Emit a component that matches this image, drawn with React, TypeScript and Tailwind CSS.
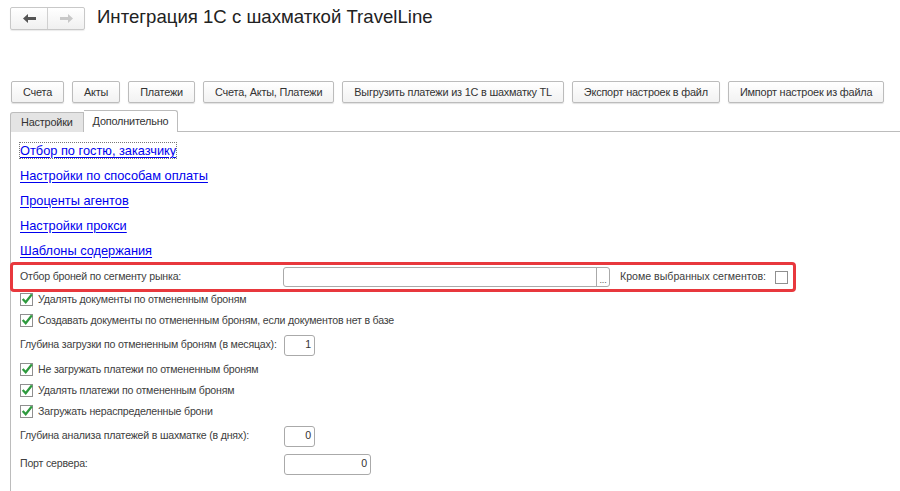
import React from 'react';

const font = { fontFamily: '"Liberation Sans", Arial, sans-serif' };

function Check({ checked }: { checked: boolean }) {
  return (
    <span className="relative w-[13px] h-[13px] border border-[#8f8f8f] bg-white shrink-0 block">
      {checked && (
        <svg viewBox="0 0 13 13" className="absolute -left-px -top-[2px] w-[14px] h-[14px]">
          <path d="M2.5 6.5 L5.3 9.5 L11 2.2" fill="none" stroke="#2e9a3e" strokeWidth="2.2" />
        </svg>
      )}
    </span>
  );
}

function CheckRow({ label }: { label: string }) {
  return (
    <div className="flex items-center gap-[5px] h-[21px]">
      <Check checked />
      <span>{label}</span>
    </div>
  );
}

function NumField({ label, value, width }: { label: string; value: string; width: string }) {
  return (
    <div className="flex items-center h-[28px]">
      <span className="w-[264px] shrink-0 whitespace-nowrap">{label}</span>
      <div className={`${width} h-[21px] border border-[#aaa] rounded-[3px] bg-white flex items-center justify-end pr-[3px] text-[#333]`}>
        {value}
      </div>
    </div>
  );
}

const buttons = [
  'Счета',
  'Акты',
  'Платежи',
  'Счета, Акты, Платежи',
  'Выгрузить платежи из 1С в шахматку TL',
  'Экспорт настроек в файл',
  'Импорт настроек из файла',
];

const links = [
  'Отбор по гостю, заказчику',
  'Настройки по способам оплаты',
  'Проценты агентов',
  'Настройки прокси',
  'Шаблоны содержания',
];

export default function App() {
  return (
    <div className="w-[900px] h-[491px] bg-white overflow-hidden text-[#404040] text-[10.6px] tracking-[-0.2px]" style={font}>
      {/* Header */}
      <div className="flex items-center pl-[10px] pt-[6px] h-[30px]">
        <div className="flex h-[23px] border border-[#c8c8c8] rounded-[2px] bg-gradient-to-b from-white to-[#f0f0f0] shadow-[0_1px_1px_rgba(0,0,0,0.08)]">
          <div className="w-[37px] flex items-center justify-center border-r border-[#d0d0d0]">
            <svg width="13" height="9" viewBox="0 0 13 9">
              <path d="M0 4.5 L5 0 L5 3 L13 3 L13 6 L5 6 L5 9 Z" fill="#555" />
            </svg>
          </div>
          <div className="w-[36px] flex items-center justify-center">
            <svg width="13" height="9" viewBox="0 0 13 9">
              <path d="M13 4.5 L8 0 L8 3 L0 3 L0 6 L8 6 L8 9 Z" fill="#c8c8c8" />
            </svg>
          </div>
        </div>
        <h1 className="ml-[12px] text-[18.6px] tracking-normal text-[#222] leading-none pb-[2px]">Интеграция 1С с шахматкой TravelLine</h1>
      </div>

      {/* Buttons */}
      <div className="flex gap-[8px] pl-[11px] mt-[51px] text-[#333] text-[10.9px]">
        {buttons.map((b) => (
          <div
            key={b}
            className="h-[22px] px-[11px] flex items-center whitespace-nowrap border border-[#bcbcbc] rounded-[2px] bg-gradient-to-b from-white to-[#f2f2f2] shadow-[0_1px_1px_rgba(0,0,0,0.12)]"
          >
            {b}
          </div>
        ))}
      </div>

      {/* Tabs */}
      <div className="flex pl-[10px] mt-[7px] h-[22px] text-[#333] text-[10.9px]">
        <div className="px-[10px] flex items-center bg-[#e4e4e4] border border-[#bcbcbc] border-b-0 rounded-tl-[3px] mt-[2px]">
          Настройки
        </div>
        <div className="px-[9px] flex items-center bg-white border border-[#bcbcbc] border-l-0 border-b-0 rounded-tr-[3px]">
          Дополнительно
        </div>
        <div className="flex-1 border-b border-[#bcbcbc]" />
      </div>

      {/* Content */}
      <div className="ml-[10px] border-l border-[#bcbcbc] h-[360px] pt-[6px]">
        <div className="flex flex-col pl-[9px]">
          {links.map((l, i) => (
            <div key={l} className="h-[25px] flex items-center">
              <a
                href="#"
                className={`text-[12.8px] tracking-normal text-[#0000ee] underline underline-offset-2 leading-[15px] ${
                  i === 0 ? 'outline outline-1 outline-dotted outline-[#777]' : ''
                }`}
              >
                {l}
              </a>
            </div>
          ))}
        </div>

        <div className="-mt-px -ml-px w-[786px] h-[30px] border-[3px] border-[#e8383d] rounded-[4px] flex items-center pl-[7px]">
          <span className="w-[263px] shrink-0 whitespace-nowrap">Отбор броней по сегменту рынка:</span>
          <div className="w-[327px] h-[20px] border border-[#aaa] rounded-[3px] flex justify-end">
            <div className="w-[13px] border-l border-[#aaa] flex items-end justify-center text-[9px] leading-[12px] text-[#555]">...</div>
          </div>
          <span className="ml-[10px] whitespace-nowrap tracking-normal">Кроме выбранных сегментов:</span>
          <span className="ml-[9px]">
            <Check checked={false} />
          </span>
        </div>

        <div className="pl-[9px] -mt-[3px]">
          <CheckRow label="Удалять документы по отмененным броням" />
          <CheckRow label="Создавать документы по отмененным броням, если документов нет в базе" />
          <NumField label="Глубина загрузки по отмененным броням (в месяцах):" value="1" width="w-[31px]" />
          <CheckRow label="Не загружать платежи по отмененным броням" />
          <CheckRow label="Удалять платежи по отмененным броням" />
          <CheckRow label="Загружать нераспределенные брони" />
          <NumField label="Глубина анализа платежей в шахматке (в днях):" value="0" width="w-[31px]" />
          <NumField label="Порт сервера:" value="0" width="w-[87px]" />
        </div>
      </div>
    </div>
  );
}
